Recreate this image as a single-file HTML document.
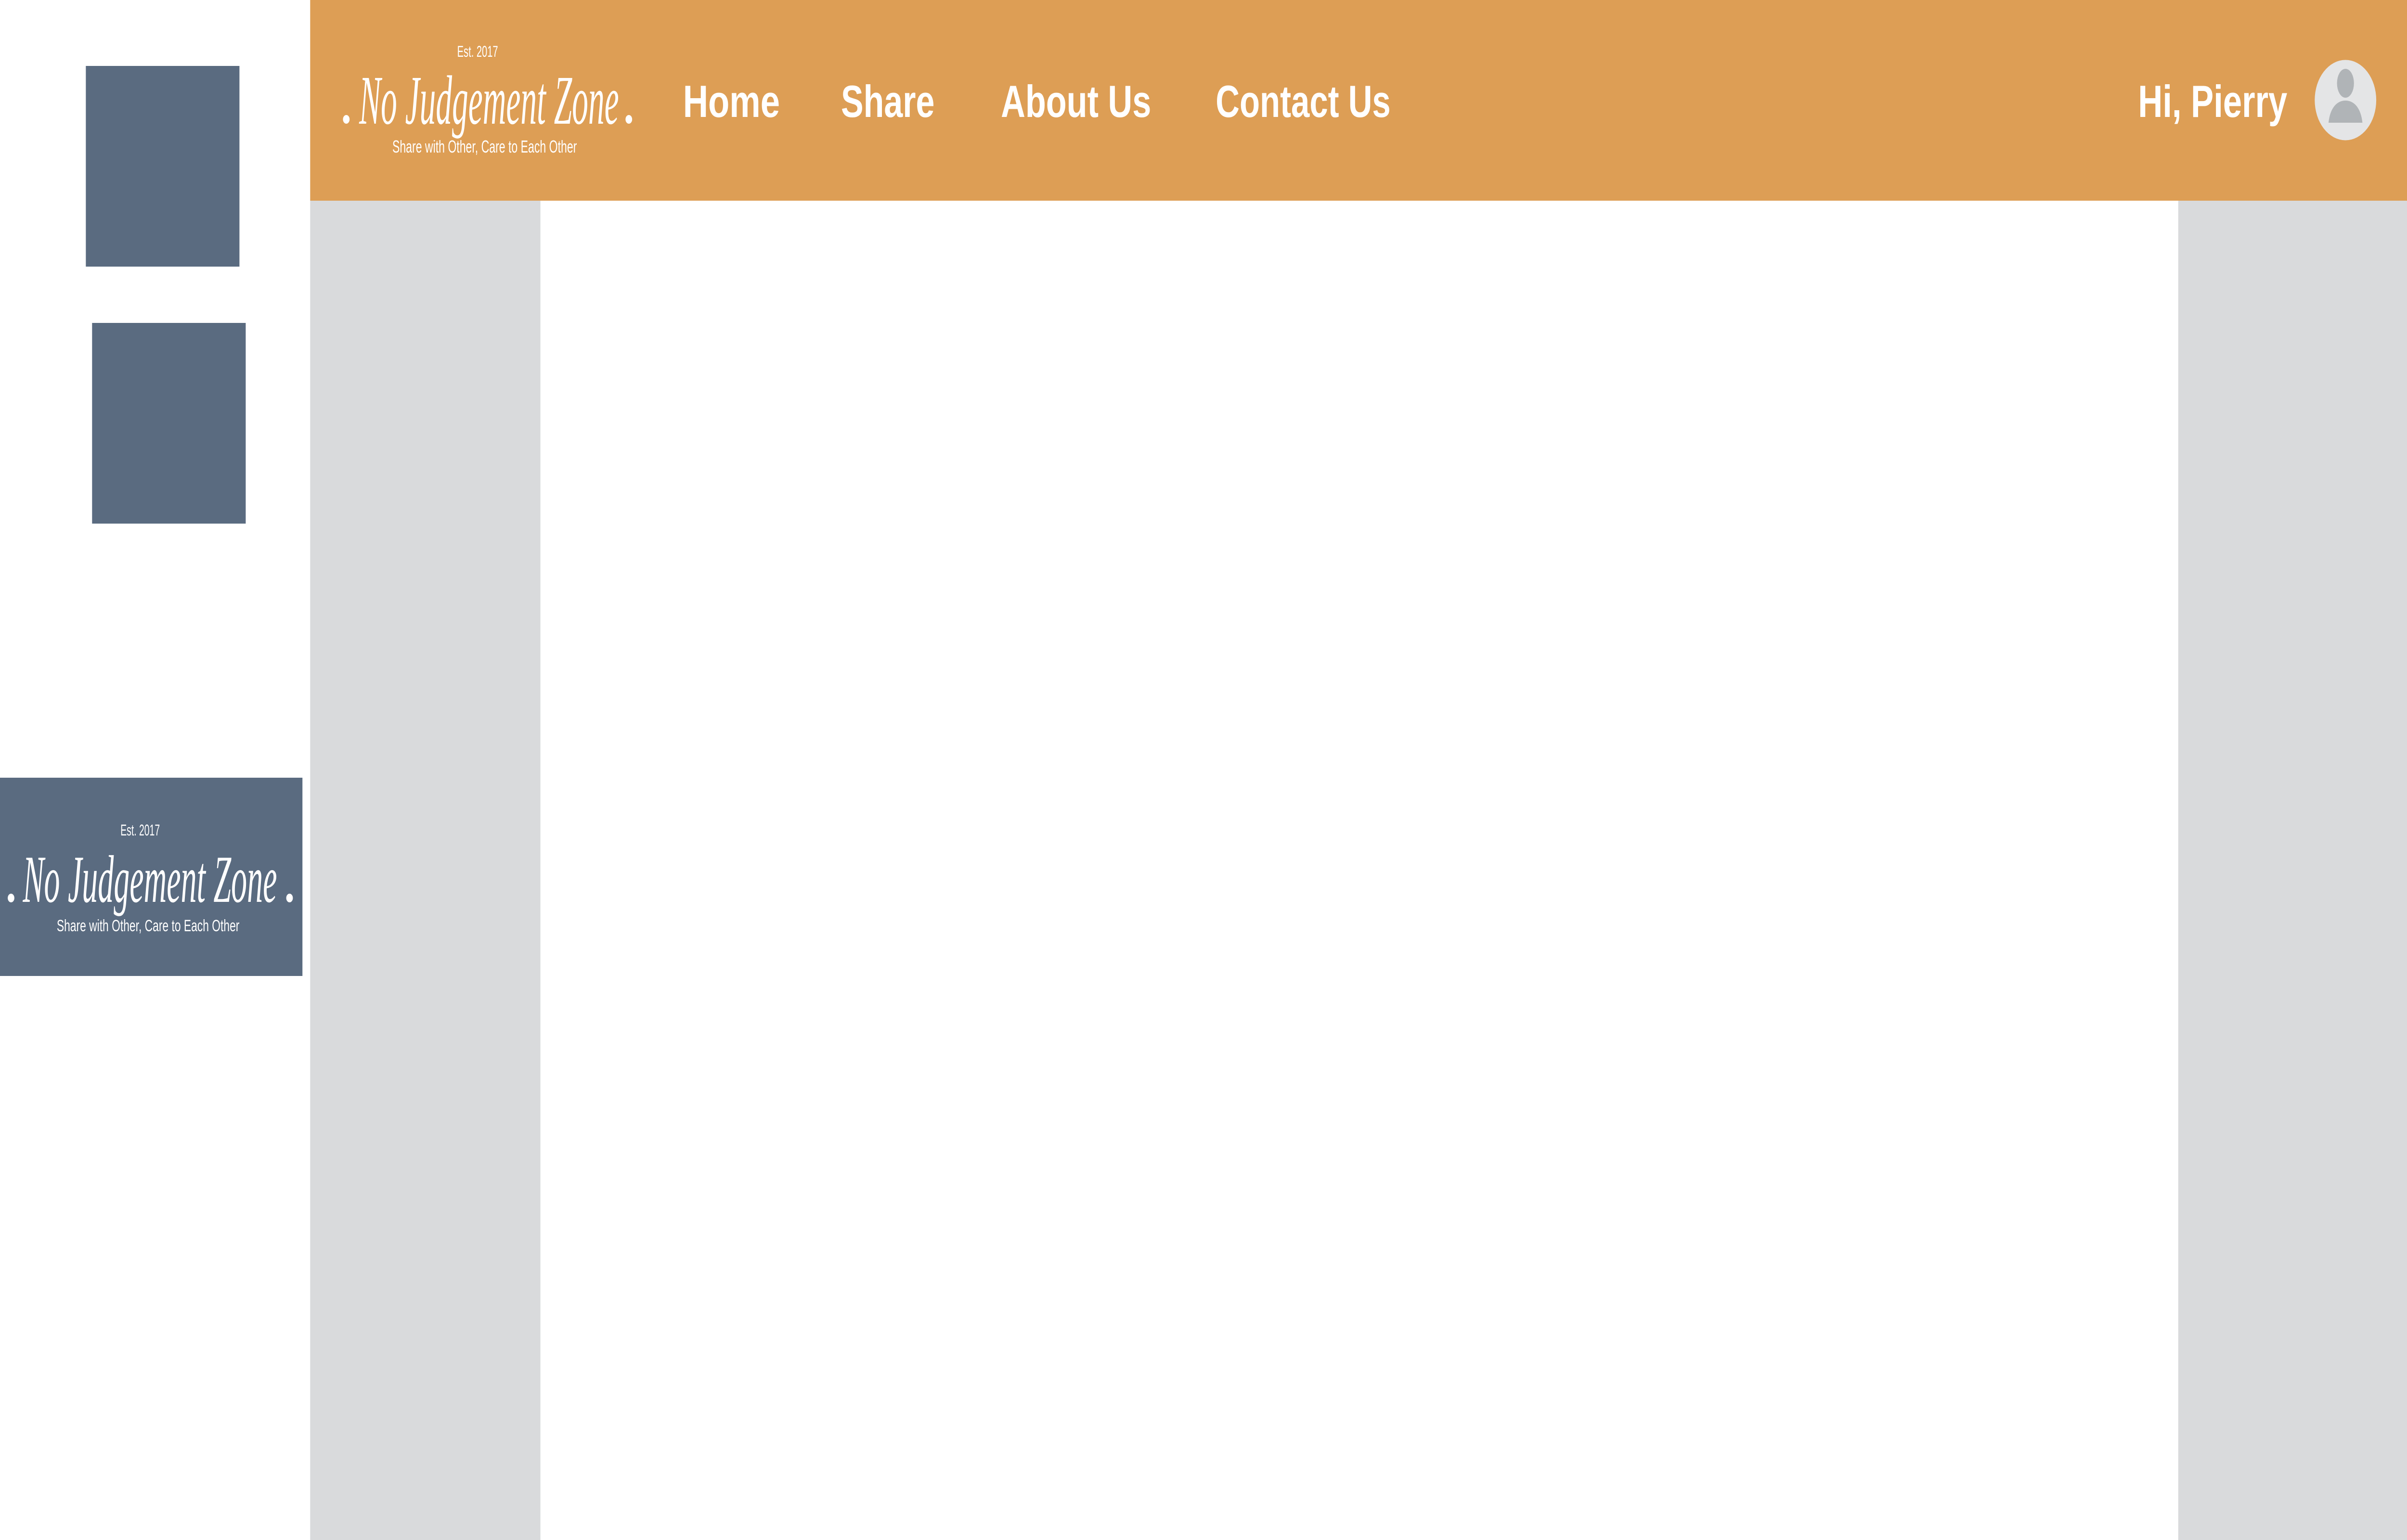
<!DOCTYPE html>
<html><head><meta charset="utf-8"><style>
html,body{margin:0;padding:0;width:100%;height:100%;overflow:hidden;background:#fff}
svg{display:block;width:100vw;height:100vh}
</style></head><body>
<svg viewBox="0 0 6534 3200" preserveAspectRatio="none" font-family="Liberation Sans, sans-serif">
<rect x="0" y="0" width="6534" height="3200" fill="#fff"/>
<rect x="233" y="137" width="417" height="417" fill="#5a6b80"/>
<rect x="250" y="671" width="417" height="417" fill="#5a6b80"/>
<rect x="0" y="1616" width="821" height="412" fill="#5a6b80"/>
<text x="327" y="1736" font-size="32" fill="#fff" textLength="107" lengthAdjust="spacingAndGlyphs">Est. 2017</text>
<circle cx="30" cy="1866" r="9" fill="#fff"/><circle cx="786" cy="1866" r="9" fill="#fff"/>
<text x="62" y="1874" font-family="Liberation Serif, serif" font-style="italic" font-size="140" fill="#fff" textLength="690" lengthAdjust="spacingAndGlyphs">No Judgement Zone</text>
<text x="154" y="1935" font-size="34" fill="#fff" textLength="496" lengthAdjust="spacingAndGlyphs">Share with Other, Care to Each Other</text>
<rect x="842" y="0" width="5692" height="417" fill="#dd9e55"/>
<rect x="842" y="417" width="625" height="2783" fill="#d9dadc"/>
<rect x="5913" y="417" width="621" height="2783" fill="#d9dadc"/>
<text x="1241" y="118" font-size="32" fill="#fff" textLength="111" lengthAdjust="spacingAndGlyphs">Est. 2017</text>
<circle cx="940" cy="248" r="9" fill="#fff"/><circle cx="1707" cy="248" r="9" fill="#fff"/>
<text x="975" y="257" font-family="Liberation Serif, serif" font-style="italic" font-size="145" fill="#fff" textLength="705" lengthAdjust="spacingAndGlyphs">No Judgement Zone</text>
<text x="1065" y="317" font-size="36" fill="#fff" textLength="501" lengthAdjust="spacingAndGlyphs">Share with Other, Care to Each Other</text>
<g font-weight="bold" font-size="94" fill="#fff">
<text x="1854" y="243" textLength="263" lengthAdjust="spacingAndGlyphs">Home</text>
<text x="2283" y="243" textLength="254" lengthAdjust="spacingAndGlyphs">Share</text>
<text x="2717" y="243" textLength="408" lengthAdjust="spacingAndGlyphs">About Us</text>
<text x="3300" y="243" textLength="475" lengthAdjust="spacingAndGlyphs">Contact Us</text>
<text x="5804" y="243" textLength="405" lengthAdjust="spacingAndGlyphs">Hi, Pierry</text>
</g>
<circle cx="6367" cy="208" r="83.5" fill="#e4e5e6"/>
<ellipse cx="6367" cy="173" rx="23" ry="30" fill="#b0b4b7"/>
<path d="M6321 255 C6325 225 6343 209 6367 209 C6391 209 6409 225 6413 255 Z" fill="#b0b4b7"/>
</svg>
</body></html>
